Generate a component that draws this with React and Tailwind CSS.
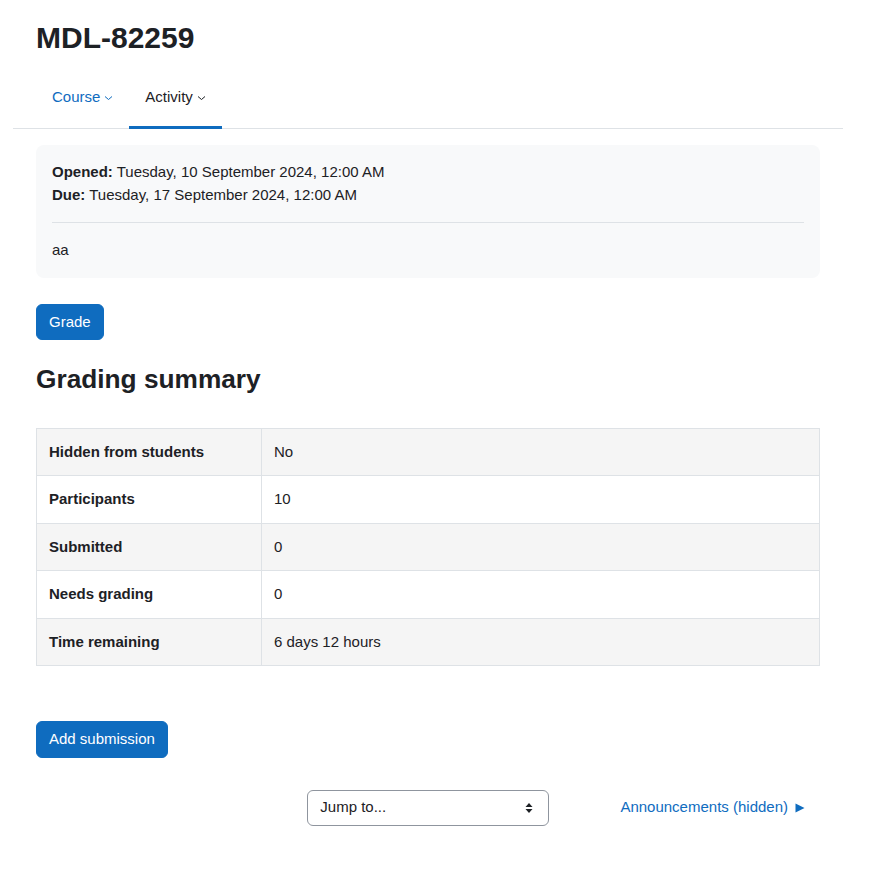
import React from "react";

function Chevron() {
  return (
    <svg width="9" height="6" viewBox="0 0 9 6" className="ml-[4px] mt-[2px]" fill="none" stroke="currentColor" strokeWidth="1">
      <path d="M1 1.5 L4.5 4.5 L8 1.5" />
    </svg>
  );
}

const rows = [
  ["Hidden from students", "No"],
  ["Participants", "10"],
  ["Submitted", "0"],
  ["Needs grading", "0"],
  ["Time remaining", "6 days 12 hours"],
];

export default function App() {
  return (
    <div className="min-h-[877px] bg-white text-[#1d2125] text-[15px] leading-[1.5]" style={{ fontFamily: '"Liberation Sans", Arial, sans-serif' }}>
      <div className="ml-[13px] w-[830px]">
        <div className="px-[23px] pt-[20px]">
          <h1 className="text-[30px] font-bold leading-[1.2] m-0">MDL-82259</h1>
        </div>
        <nav className="mt-[10px] border-b border-[#dee2e6] px-[23px] flex">
          <div className="h-[63px] -mb-px pt-[2px] border-b-[3px] border-transparent flex items-center px-[16px] text-[#0f6cbf]">
            <span>Course</span>
            <Chevron />
          </div>
          <div className="h-[63px] -mb-px pt-[2px] border-b-[3px] border-[#0f6cbf] flex items-center px-[16px] text-[#1d2125]">
            <span>Activity</span>
            <Chevron />
          </div>
        </nav>
        <div className="px-[23px]">
          <div className="mt-[16px] bg-[#f8f9fa] rounded-lg p-[16px]">
            <div><strong>Opened:</strong> Tuesday, 10 September 2024, 12:00 AM</div>
            <div><strong>Due:</strong> Tuesday, 17 September 2024, 12:00 AM</div>
            <hr className="my-[16px] border-0 border-t border-[#dee2e6]" />
            <div>aa</div>
          </div>
          <div className="mt-[26px]">
            <button className="bg-[#0f6cbf] text-white rounded-[6px] px-[12px] py-[6px] border border-[#0f6cbf] leading-[1.5]">Grade</button>
          </div>
          <h2 className="mt-[24px] mb-[32px] text-[26.25px] font-bold leading-[1.2]">Grading summary</h2>
          <table className="w-full border-collapse border border-[#dee2e6]">
            <tbody>
              {rows.map(([k, v], i) => (
                <tr key={k} className={i % 2 === 0 ? "bg-[#f5f5f5]" : "bg-white"}>
                  <th className="w-[225px] text-left font-bold p-[12px] border border-[#dee2e6]">{k}</th>
                  <td className="p-[12px] border border-[#dee2e6]">{v}</td>
                </tr>
              ))}
            </tbody>
          </table>
          <div className="mt-[55px]">
            <button className="bg-[#0f6cbf] text-white rounded-[6px] px-[12px] py-[6px] border border-[#0f6cbf] leading-[1.5]">Add submission</button>
          </div>
          <div className="mt-[32px] grid grid-cols-3">
            <div></div>
            <div className="px-[10px]">
              <div className="h-[36px] border border-[#8f959e] rounded-[6px] flex items-center justify-between pl-[12px] pr-[15px]">
                <span>Jump to...</span>
                <svg width="8" height="12" viewBox="0 0 8 12" fill="#1d2125">
                  <path d="M4 1 L7.5 5 L0.5 5 Z" />
                  <path d="M4 11 L7.5 7 L0.5 7 Z" />
                </svg>
              </div>
            </div>
            <div className="flex items-center justify-end pr-[15px] text-[#0f6cbf]">
              <span>Announcements (hidden)</span>
              <svg width="10" height="10" viewBox="0 0 10 10" className="ml-[7px]" fill="#0f6cbf">
                <path d="M0.5 0.5 L9.5 5 L0.5 9.5 Z" />
              </svg>
            </div>
          </div>
        </div>
      </div>
    </div>
  );
}
